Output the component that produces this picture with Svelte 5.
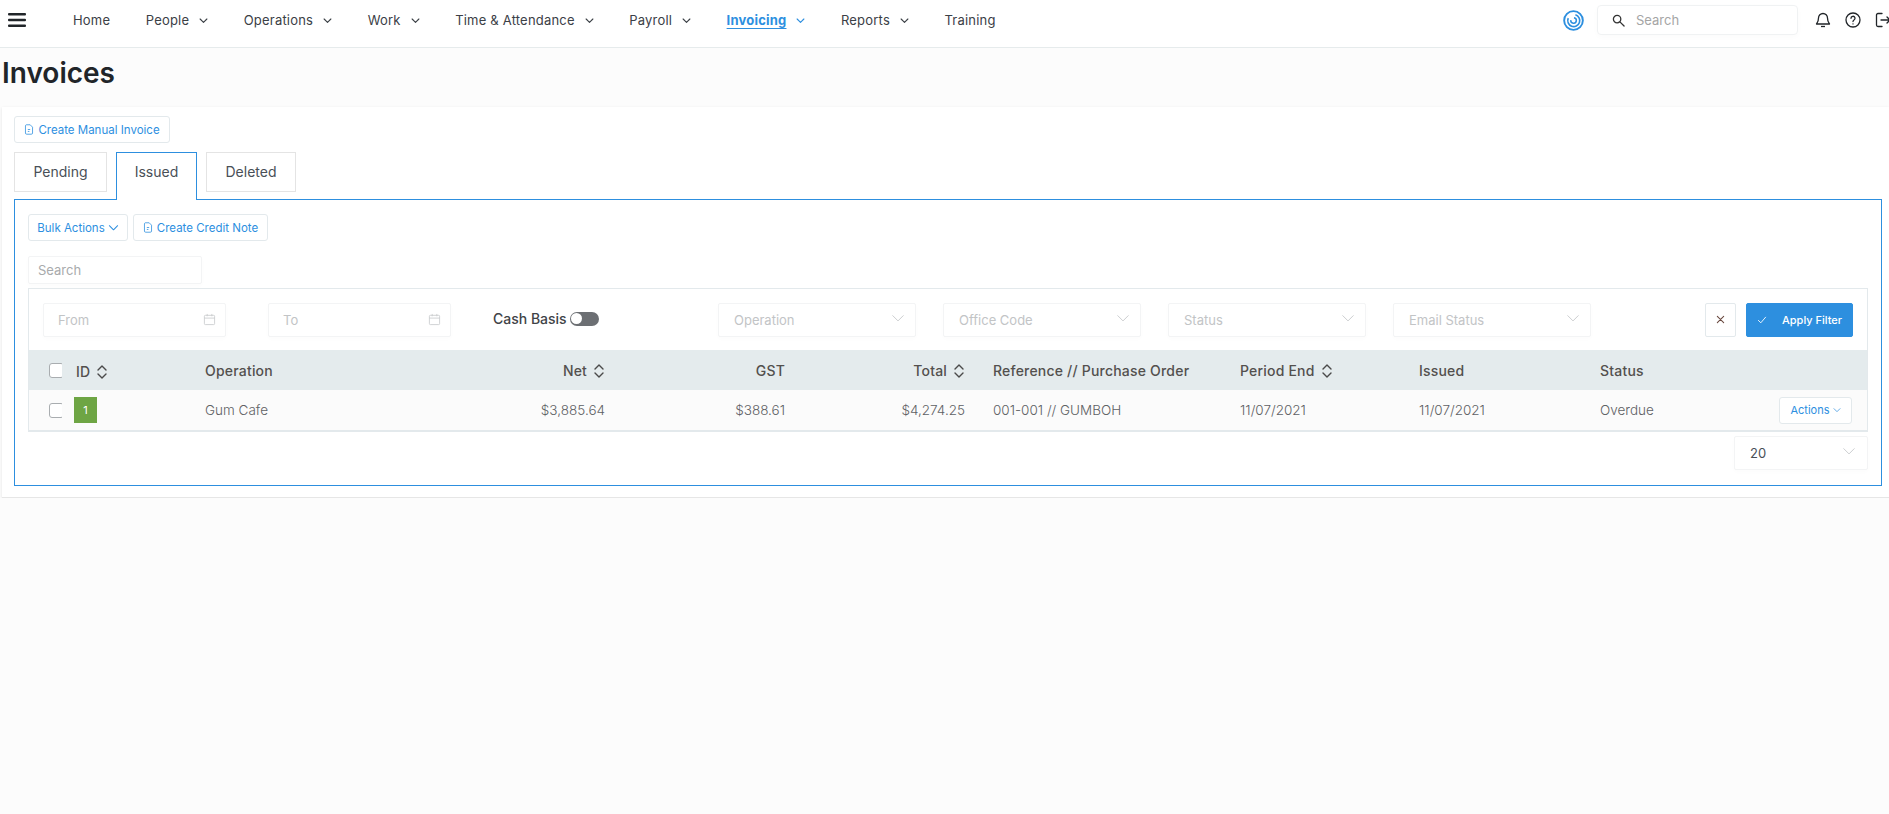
<script>
  const navItems = [
    { label: "Home" },
    { label: "People", caret: true },
    { label: "Operations", caret: true },
    { label: "Work", caret: true },
    { label: "Time & Attendance", caret: true },
    { label: "Payroll", caret: true },
    { label: "Invoicing", caret: true, active: true },
    { label: "Reports", caret: true },
    { label: "Training" },
  ];
  const tabs = ["Pending", "Issued", "Deleted"];
  const selects = ["Operation", "Office Code", "Status", "Email Status"];
</script>

{#snippet chevron(cls)}
  <svg class={cls} viewBox="0 0 12 12" fill="none" stroke="currentColor" stroke-linecap="round" stroke-linejoin="round"><path d="M1.5 4l4.5 4.5L10.5 4" /></svg>
{/snippet}

{#snippet fileIcon()}
  <svg class="file" viewBox="0 0 12 14" fill="none" stroke="currentColor" stroke-width="1"><path d="M2.5 1h5L10.5 4v7.5a1.5 1.5 0 0 1-1.5 1.5H3a1.5 1.5 0 0 1-1.5-1.5V2.5A1.5 1.5 0 0 1 2.5 1z" /><path d="M4.5 7h3M4.5 9.500h2" /></svg>
{/snippet}

{#snippet sortIcon()}
  <svg class="sort" viewBox="0 0 12 16" fill="none" stroke="currentColor" stroke-width="1.4" stroke-linecap="round" stroke-linejoin="round"><path d="M2 6l4-4 4 4M2 10l4 4 4-4" /></svg>
{/snippet}

{#snippet calendar()}
  <svg class="cal" viewBox="0 0 14 14" fill="none" stroke="currentColor"><rect x="1.500" y="2.500" width="11" height="10" rx="1" /><path d="M1.500 5.500h11M4.500 1v2.500M9.500 1v2.500" /></svg>
{/snippet}

<header class="topbar">
  <svg class="burger" viewBox="0 0 18 14" fill="#212529"><rect width="18" height="2.400" rx="1" /><rect y="5.800" width="18" height="2.400" rx="1" /><rect y="11.600" width="18" height="2.400" rx="1" /></svg>
  <nav class="nav">
    {#each navItems as item}
      <span class="nav-item" class:active={item.active}>
        <span class="nav-label">{item.label}</span>
        {#if item.caret}{@render chevron("nav-caret")}{/if}
      </span>
    {/each}
  </nav>
  <div class="top-right">
    <svg class="logo" viewBox="0 0 22 22" fill="none" stroke="#2d8fdf"><circle cx="11" cy="11" r="9.800" stroke-width="2" /><path d="M13 5a6.300 6.300 0 1 1-7.500 3.500" stroke-width="1.700" /><path d="M11.500 8.200a2.900 2.900 0 1 1-3.300 2.500" stroke-width="1.600" /></svg>
    <div class="top-search">
      <svg viewBox="0 0 14 14" fill="none" stroke="#333" stroke-width="1.400" stroke-linecap="round"><circle cx="5.500" cy="5.500" r="4" /><path d="M8.500 8.500L13 13" /></svg>
      <span>Search</span>
    </div>
    <svg class="top-icon" viewBox="0 0 16 16" fill="none" stroke="#212529" stroke-width="1.300" stroke-linejoin="round"><path d="M8 1.500a4.500 4.500 0 0 0-4.500 4.500c0 4-2 5.500-2 6h13c0-.5-2-2-2-6A4.500 4.500 0 0 0 8 1.500z" /><path d="M6 14.500h4" /></svg>
    <svg class="top-icon help" viewBox="0 0 16 16" fill="none" stroke="#212529" stroke-width="1.300" stroke-linecap="round"><circle cx="8" cy="8" r="7" /><path d="M6 6.300a2 2 0 1 1 3 1.700c-.7.4-1 .8-1 1.500M8 11.800v.1" /></svg>
    <svg class="top-icon logout" viewBox="0 0 16 16" fill="none" stroke="#212529" stroke-width="1.300" stroke-linecap="round" stroke-linejoin="round"><path d="M7 1.500H3a1.500 1.500 0 0 0-1.500 1.500v10A1.500 1.500 0 0 0 3 14.500h4M6 8h9M12 5l3 3-3 3" /></svg>
  </div>
</header>

<h1 class="title">Invoices</h1>

<main class="card">
  <button class="btn create-invoice">{@render fileIcon()}Create Manual Invoice</button>

  <div class="tabs">
    {#each tabs as tab}
      <div class="tab" class:current={tab === "Issued"}>{tab}</div>
    {/each}
  </div>

  <section class="panel">
    <div class="actions-row">
      <button class="btn bulk">Bulk Actions {@render chevron("btn-caret")}</button>
      <button class="btn credit">{@render fileIcon()}Create Credit Note</button>
    </div>
    <div class="field panel-search">Search</div>

    <div class="table-wrap">
      <div class="filters">
        <div class="field date from">From {@render calendar()}</div>
        <div class="field date to">To {@render calendar()}</div>
        <div class="cash">Cash Basis <span class="toggle"><span class="knob"></span></span></div>
        <div class="selects">
          {#each selects as s}
            <div class="field select">{s} {@render chevron("select-caret")}</div>
          {/each}
        </div>
        <button class="clear" aria-label="Clear filter">
          <svg viewBox="0 0 10 10" fill="none" stroke="#6b4a40" stroke-width="1.200" stroke-linecap="round"><path d="M1.500 1.500l7 7M8.500 1.500l-7 7" /></svg>
        </button>
        <button class="apply">
          <svg viewBox="0 0 12 10" fill="none" stroke="#fff" stroke-width="1.100" stroke-linecap="round" stroke-linejoin="round"><path d="M1.500 5.500L4.500 8.500 10.500 1.500" /></svg>
          <span>Apply Filter</span>
        </button>
      </div>

      <table>
        <colgroup>
          <col style="width:33px" />
          <col style="width:129px" />
          <col style="width:209px" />
          <col style="width:219px" />
          <col style="width:180px" />
          <col style="width:180px" />
          <col style="width:247px" />
          <col style="width:179px" />
          <col style="width:181px" />
          <col style="width:181px" />
          <col />
        </colgroup>
        <thead>
          <tr>
            <th class="check-cell"><span class="checkbox"></span></th>
            <th class="id-head">ID {@render sortIcon()}</th>
            <th>Operation</th>
            <th class="num">Net {@render sortIcon()}</th>
            <th class="num">GST</th>
            <th class="num">Total {@render sortIcon()}</th>
            <th>Reference // Purchase Order</th>
            <th>Period End {@render sortIcon()}</th>
            <th>Issued</th>
            <th>Status</th>
            <th></th>
          </tr>
        </thead>
        <tbody>
          <tr>
            <td class="check-cell"><span class="checkbox"></span></td>
            <td><span class="badge">1</span></td>
            <td>Gum Cafe</td>
            <td class="num">$3,885.64</td>
            <td class="num">$388.61</td>
            <td class="num">$4,274.25</td>
            <td>001-001 // GUMBOH</td>
            <td>11/07/2021</td>
            <td>11/07/2021</td>
            <td>Overdue</td>
            <td class="act"><button class="btn actions">Actions {@render chevron("btn-caret small")}</button></td>
          </tr>
        </tbody>
      </table>
    </div>

    <div class="pager">
      <div class="field page-size">20 {@render chevron("select-caret")}</div>
    </div>
  </section>
</main>

<style>
  :global(body) {
    background: #fcfcfc;
    font-family: Inter, "Open Sans", sans-serif;
    color: #495057;
    overflow: hidden;
  }
  button {
    font-family: inherit;
    cursor: pointer;
  }

  .topbar {
    display: flex;
    align-items: center;
    padding-bottom: 7px;
    height: 40px;
    background: #fff;
    border-bottom: 1px solid #e6ebec;
  }
  .burger {
    width: 18px;
    height: 14px;
    margin: 0 47px 0 8px;
    flex: none;
  }
  .nav {
    display: flex;
    gap: 35.500px;
    font-size: 13px;
    letter-spacing: 0.2px;
    color: #3b4046;
  }
  .nav-item {
    display: flex;
    align-items: center;
    gap: 10px;
  }
  .nav-item.active {
    color: #2d8fdf;
    font-weight: 700;
  }
  .nav-item.active .nav-label {
    text-decoration: underline;
    text-underline-offset: 3px;
  }
  :global(.nav-caret) {
    width: 9px;
    height: 9px;
    stroke-width: 1.500;
  }
  .top-right {
    margin-left: auto;
    margin-right: -2px;
    display: flex;
    align-items: center;
  }
  .logo {
    width: 21px;
    height: 21px;
    margin-right: 13px;
  }
  .top-search {
    width: 201px;
    height: 30px;
    box-sizing: border-box;
    display: flex;
    align-items: center;
    gap: 11px;
    padding-left: 14px;
    border: 1px solid #f0f2f3;
    border-radius: 4px;
    box-shadow: 0 2px 6px rgba(0, 0, 0, 0.02);
    font-size: 13px;
    color: #a5a5a5;
  }
  .top-search svg {
    width: 13px;
    height: 13px;
  }
  .top-icon {
    width: 16px;
    height: 16px;
    margin-left: 17px;
    flex: none;
  }
  .top-icon.help {
    margin-left: 14px;
  }
  .top-icon.logout {
    margin-left: 14px;
  }

  .title {
    margin: 0;
    padding: 10px 0 0 2px;
    height: 49px;
    font-size: 28px;
    line-height: 31px;
    font-weight: 600;
    color: #212529;
  }

  .card {
    margin-left: 2px;
    height: 391px;
    box-sizing: border-box;
    padding: 9px 7px 0 12px;
    background: #fff;
    border-bottom: 1px solid #e6e6e6;
    box-shadow: 0 1px 3px rgba(0, 0, 0, 0.1);
  }

  .btn {
    display: inline-flex;
    align-items: center;
    height: 27px;
    padding: 0;
    background: #fff;
    border: 1px solid #e3e9ec;
    border-radius: 3px;
    color: #2d8fdf;
    font-size: 11.500px;
  }
  .file {
    width: 10px;
    height: 11px;
    margin-right: 4px;
  }
  :global(.btn-caret) {
    width: 11px;
    height: 11px;
    margin-left: 3px;
    stroke-width: 1.100;
  }
  .create-invoice {
    width: 156px;
    justify-content: center;
    display: flex;
  }

  .tabs {
    display: flex;
    gap: 9px;
    margin-top: 9px;
    height: 47px;
    position: relative;
    z-index: 1;
  }
  .tab {
    height: 40px;
    box-sizing: border-box;
    padding-top: 10px;
    text-align: center;
    font-size: 14px;
    border: 1px solid #e4e4e4;
    color: #495057;
  }
  .tab:nth-child(1) {
    width: 93px;
  }
  .tab:nth-child(2) {
    width: 81px;
  }
  .tab:nth-child(3) {
    width: 90px;
  }
  .tab.current {
    height: 48px;
    border: 1px solid #2d8fdf;
    border-bottom: 0;
    background: #fff;
  }

  .panel {
    height: 287px;
    box-sizing: border-box;
    padding: 14px 13px 0;
    border: 1px solid #2d8fdf;
  }
  .actions-row {
    display: flex;
    gap: 5px;
  }
  .bulk {
    width: 100px;
    justify-content: center;
  }
  .credit {
    width: 135px;
    justify-content: center;
  }

  .field {
    display: flex;
    align-items: center;
    box-sizing: border-box;
    border: 1px solid #f3f4f5;
    border-radius: 2px;
    background: #fff;
    font-size: 13px;
    color: #c2c4c6;
    box-shadow: 0 2px 5px rgba(0, 0, 0, 0.015);
  }
  .panel-search {
    margin-top: 15px;
    width: 174px;
    height: 28px;
    padding-left: 9px;
    color: #a8aaac;
  }

  .table-wrap {
    margin-top: 4px;
    width: 1840px;
    box-sizing: border-box;
    border: 1px solid #e3e9ec;
  }
  .filters {
    display: flex;
    align-items: center;
    height: 61px;
    box-sizing: border-box;
    padding: 0 14px 0 14px;
  }
  .date {
    height: 34px;
    width: 183px;
    padding: 0 9px 0 14px;
    justify-content: space-between;
  }
  .date.to {
    margin-left: 42px;
  }
  .cal {
    width: 13px;
    height: 13px;
    color: #c8cacc;
    stroke-width: 0.900;
  }
  .cash {
    display: flex;
    align-items: center;
    gap: 3px;
    width: 225px;
    margin-left: 42px;
    font-size: 14px;
    font-weight: 500;
    color: #3f4347;
    margin-bottom: 2px;
  }
  .toggle {
    width: 29px;
    height: 14px;
    border-radius: 7px;
    background: #6c6f73;
    display: flex;
    align-items: center;
    padding-left: 1px;
    box-sizing: border-box;
  }
  .knob {
    width: 11px;
    height: 11px;
    border-radius: 50%;
    background: #fff;
  }
  .selects {
    display: flex;
    gap: 27px;
  }
  .select {
    width: 198px;
    height: 34px;
    padding: 0 10px 0 15px;
    justify-content: space-between;
  }
  :global(.select-caret) {
    width: 14px;
    height: 14px;
    color: #c8cacc;
    stroke-width: 0.800;
    margin-bottom: 4px;
  }
  .clear {
    margin-left: 114px;
    width: 31px;
    height: 34px;
    padding: 0;
    display: flex;
    align-items: center;
    justify-content: center;
    background: #fff;
    border: 1px solid #e3e9ec;
    border-radius: 2px;
  }
  .clear svg {
    width: 9px;
    height: 9px;
  }
  .apply {
    margin-left: 10px;
    width: 107px;
    height: 34px;
    display: flex;
    align-items: center;
    padding: 0 0 0 10px;
    background: #2d8fdf;
    border: 1px solid #2d8fdf;
    border-radius: 2px;
    color: #fff;
    font-size: 11px;
    font-weight: 500;
  }
  .apply svg {
    width: 10px;
    height: 8px;
    margin-right: 15px;
  }

  table {
    width: 100%;
    table-layout: fixed;
    border-collapse: collapse;
    font-size: 13.500px;
  }
  th {
    height: 40px;
    padding: 0 14px;
    background: #e4ebed;
    text-align: left;
    font-size: 14px;
    letter-spacing: 0.2px;
    font-weight: 500;
    color: #53504e;
    white-space: nowrap;
  }
  th.id-head {
    height: 37px;
    padding-top: 3px;
  }
  td {
    height: 40px;
    padding: 0 14px;
    background: #fbfbfb;
    border-bottom: 1px solid #e3e9ec;
    color: #5e6164;
    font-weight: 300;
    white-space: nowrap;
  }
  .num {
    text-align: right;
  }
  .check-cell {
    padding: 0 0 0 20px;
  }
  .checkbox {
    display: block;
    width: 13px;
    height: 13px;
    border: 1px solid #a9adb0;
    border-radius: 3px;
    background: #fff;
  }
  .sort {
    width: 12px;
    height: 16px;
    margin-left: 2px;
    vertical-align: -3px;
    color: #4a4a4a;
  }
  .badge {
    display: block;
    width: 23px;
    height: 26px;
    line-height: 26px;
    text-align: center;
    margin-left: -2px;
    background: #6ea544;
    color: #fff;
    font-size: 11px;
    font-weight: 400;
  }
  .act {
    padding: 0 15px 0 0;
    text-align: right;
  }
  .actions {
    width: 73px;
    justify-content: center;
    font-size: 11px;
  }
  :global(.small) {
    width: 8px !important;
    height: 8px !important;
  }

  .pager {
    display: flex;
    justify-content: flex-end;
    width: 1840px;
    margin-top: 4px;
  }
  .page-size {
    width: 134px;
    height: 34px;
    padding: 0 11px 0 15px;
    justify-content: space-between;
    color: #495057;
    font-size: 13px;
  }
</style>
